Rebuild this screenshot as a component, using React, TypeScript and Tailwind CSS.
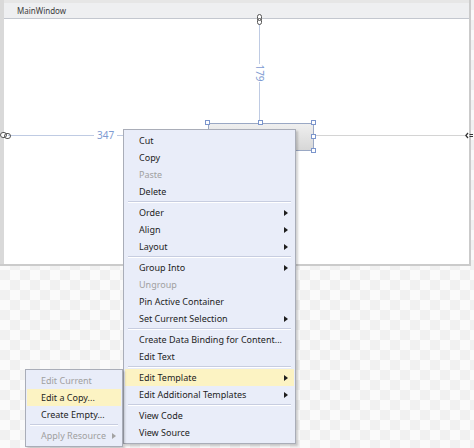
import React from 'react';

type Item =
    | { kind: 'sep' }
    | { kind: 'item'; label: string; disabled?: boolean; sub?: boolean; active?: boolean };

const mainItems: Item[] = [
    { kind: 'item', label: 'Cut' },
    { kind: 'item', label: 'Copy' },
    { kind: 'item', label: 'Paste', disabled: true },
    { kind: 'item', label: 'Delete' },
    { kind: 'sep' },
    { kind: 'item', label: 'Order', sub: true },
    { kind: 'item', label: 'Align', sub: true },
    { kind: 'item', label: 'Layout', sub: true },
    { kind: 'sep' },
    { kind: 'item', label: 'Group Into', sub: true },
    { kind: 'item', label: 'Ungroup', disabled: true },
    { kind: 'item', label: 'Pin Active Container' },
    { kind: 'item', label: 'Set Current Selection', sub: true },
    { kind: 'sep' },
    { kind: 'item', label: 'Create Data Binding for Content...' },
    { kind: 'item', label: 'Edit Text' },
    { kind: 'sep' },
    { kind: 'item', label: 'Edit Template', sub: true, active: true },
    { kind: 'item', label: 'Edit Additional Templates', sub: true },
    { kind: 'sep' },
    { kind: 'item', label: 'View Code' },
    { kind: 'item', label: 'View Source' },
];

const templateItems: Item[] = [
    { kind: 'item', label: 'Edit Current', disabled: true },
    { kind: 'item', label: 'Edit a Copy...', active: true },
    { kind: 'item', label: 'Create Empty...' },
    { kind: 'sep' },
    { kind: 'item', label: 'Apply Resource', sub: true, disabled: true },
];

const Arrow = ({ dim }: { dim?: boolean }) => (
    <svg width="4" height="6" viewBox="0 0 4 6" className="shrink-0 ml-[6px]">
        <path d="M0 0L4 3L0 6Z" fill={dim ? '#a3a3a3' : '#1e1e1e'} />
    </svg>
);

const Menu = ({ items, className }: { items: Item[]; className: string }) => (
    <div className={`absolute bg-[#e9edf9] border border-[#a9adb8] py-[2px] shadow-[2px_2px_2px_rgba(0,0,0,0.18)] font-['Noto_Sans',sans-serif] text-[9px] ${className}`}>
        {items.map((it, i) =>
            it.kind === 'sep' ? (
                <div key={i} className="mx-[4px] my-[1px] h-[2px] border-t border-[#c7cde0] border-b border-b-white"></div>
            ) : (
                <div
                    key={i}
                    className={`mx-[1px] h-[17px] flex items-center justify-between pl-[14px] pr-[6px] ${it.active ? 'bg-[#fcf3c3]' : ''} ${it.disabled ? 'text-[#a0a0a0]' : 'text-[#1e1e1e]'}`}
                >
                    <span className="whitespace-nowrap">{it.label}</span>
                    {it.sub && <Arrow dim={it.disabled} />}
                </div>
            )
        )}
    </div>
);

const Handle = ({ className }: { className: string }) => (
    <div className={`absolute w-[5px] h-[5px] bg-white border border-[#7b95cc] ${className}`}></div>
);

const App: React.FC = () => {
    return (
        <div className="relative w-[474px] h-[448px] overflow-hidden bg-[#f7f7f7] bg-[image:repeating-conic-gradient(#f1f1f1_0_25%,#fafafa_0_50%)] bg-[length:20px_20px]">
            {/* Designer window frame */}
            <div className="flex w-[471px] h-[266px] border-b-2 border-[#cbcbcb]">
                <div className="w-[4px] bg-[#d9d9d9]"></div>
                <div className="flex-1 flex flex-col border-r-2 border-[#cbcbcb]">
                    <div className="h-[19px] bg-[#eeeff1] border-t-[3px] border-[#e6e6e6] border-b border-b-[#c3c7cf] flex items-center pl-[13px]">
                        <span className="font-['Noto_Sans',sans-serif] text-[8px] text-[#3c3c3c] leading-none">MainWindow</span>
                    </div>
                    <div className="flex-1 relative bg-white">
                        {/* vertical margin adorner */}
                        <div className="absolute left-[255px] top-[5px] h-[98px] w-px bg-[#bfcbe3]"></div>
                        <svg className="absolute left-[253px] top-[-5px]" width="5" height="11" viewBox="0 0 5 11">
                            <rect x="0.5" y="0.5" width="4" height="6" rx="2" fill="white" stroke="#555" strokeWidth="1" />
                            <rect x="0.5" y="4.5" width="4" height="6" rx="2" fill="none" stroke="#555" strokeWidth="1" />
                        </svg>
                        <div className="absolute left-[250px] top-[45px] w-[12px] h-[18px] bg-white flex items-center justify-center">
                            <span className="rotate-90 font-['Noto_Sans',sans-serif] text-[10px] text-[#7e9bd2] leading-none">179</span>
                        </div>

                        {/* horizontal margin adorner */}
                        <div className="absolute left-[4px] top-[116px] w-[200px] h-px bg-[#bfcbe3]"></div>
                        <svg className="absolute left-[-4px] top-[113px]" width="11" height="7" viewBox="0 0 11 7">
                            <rect x="0.5" y="0.5" width="6" height="5" rx="2.5" fill="white" stroke="#555" strokeWidth="1" />
                            <rect x="4.5" y="1.5" width="6" height="5" rx="2.5" fill="none" stroke="#555" strokeWidth="1" />
                        </svg>
                        <div className="absolute left-[90px] top-[110px] px-[3px] bg-white font-['Noto_Sans',sans-serif] text-[10px] text-[#7e9bd2] leading-[12px]">347</div>

                        <div className="absolute left-[310px] top-[116px] w-[151px] h-px bg-[#d4d4d4]"></div>
                        <svg className="absolute left-[461px] top-[113px]" width="8" height="7" viewBox="0 0 8 7">
                            <path d="M3 1L0.8 3.5L3 6" fill="none" stroke="#333" strokeWidth="1.3" />
                            <path d="M4.5 2.5H8M4.5 4.5H8" stroke="#333" strokeWidth="1" />
                        </svg>

                        {/* selected button */}
                        <div className="absolute left-[204px] top-[104px] w-[106px] h-[28px] border border-[#9aa8c4] bg-[linear-gradient(#efefef,#d7d7d7)]"></div>
                        <Handle className="left-[201px] top-[101px]" />
                        <Handle className="left-[254px] top-[101px]" />
                        <Handle className="left-[307px] top-[101px]" />
                        <Handle className="left-[307px] top-[115px]" />
                        <Handle className="left-[307px] top-[129px]" />
                    </div>
                </div>
            </div>

            {/* context menu and its submenu */}
            <Menu items={mainItems} className="left-[123px] top-[129px] w-[173px]" />
            <Menu items={templateItems} className="left-[25px] top-[369px] w-[98px]" />
        </div>
    );
};

export default App;
